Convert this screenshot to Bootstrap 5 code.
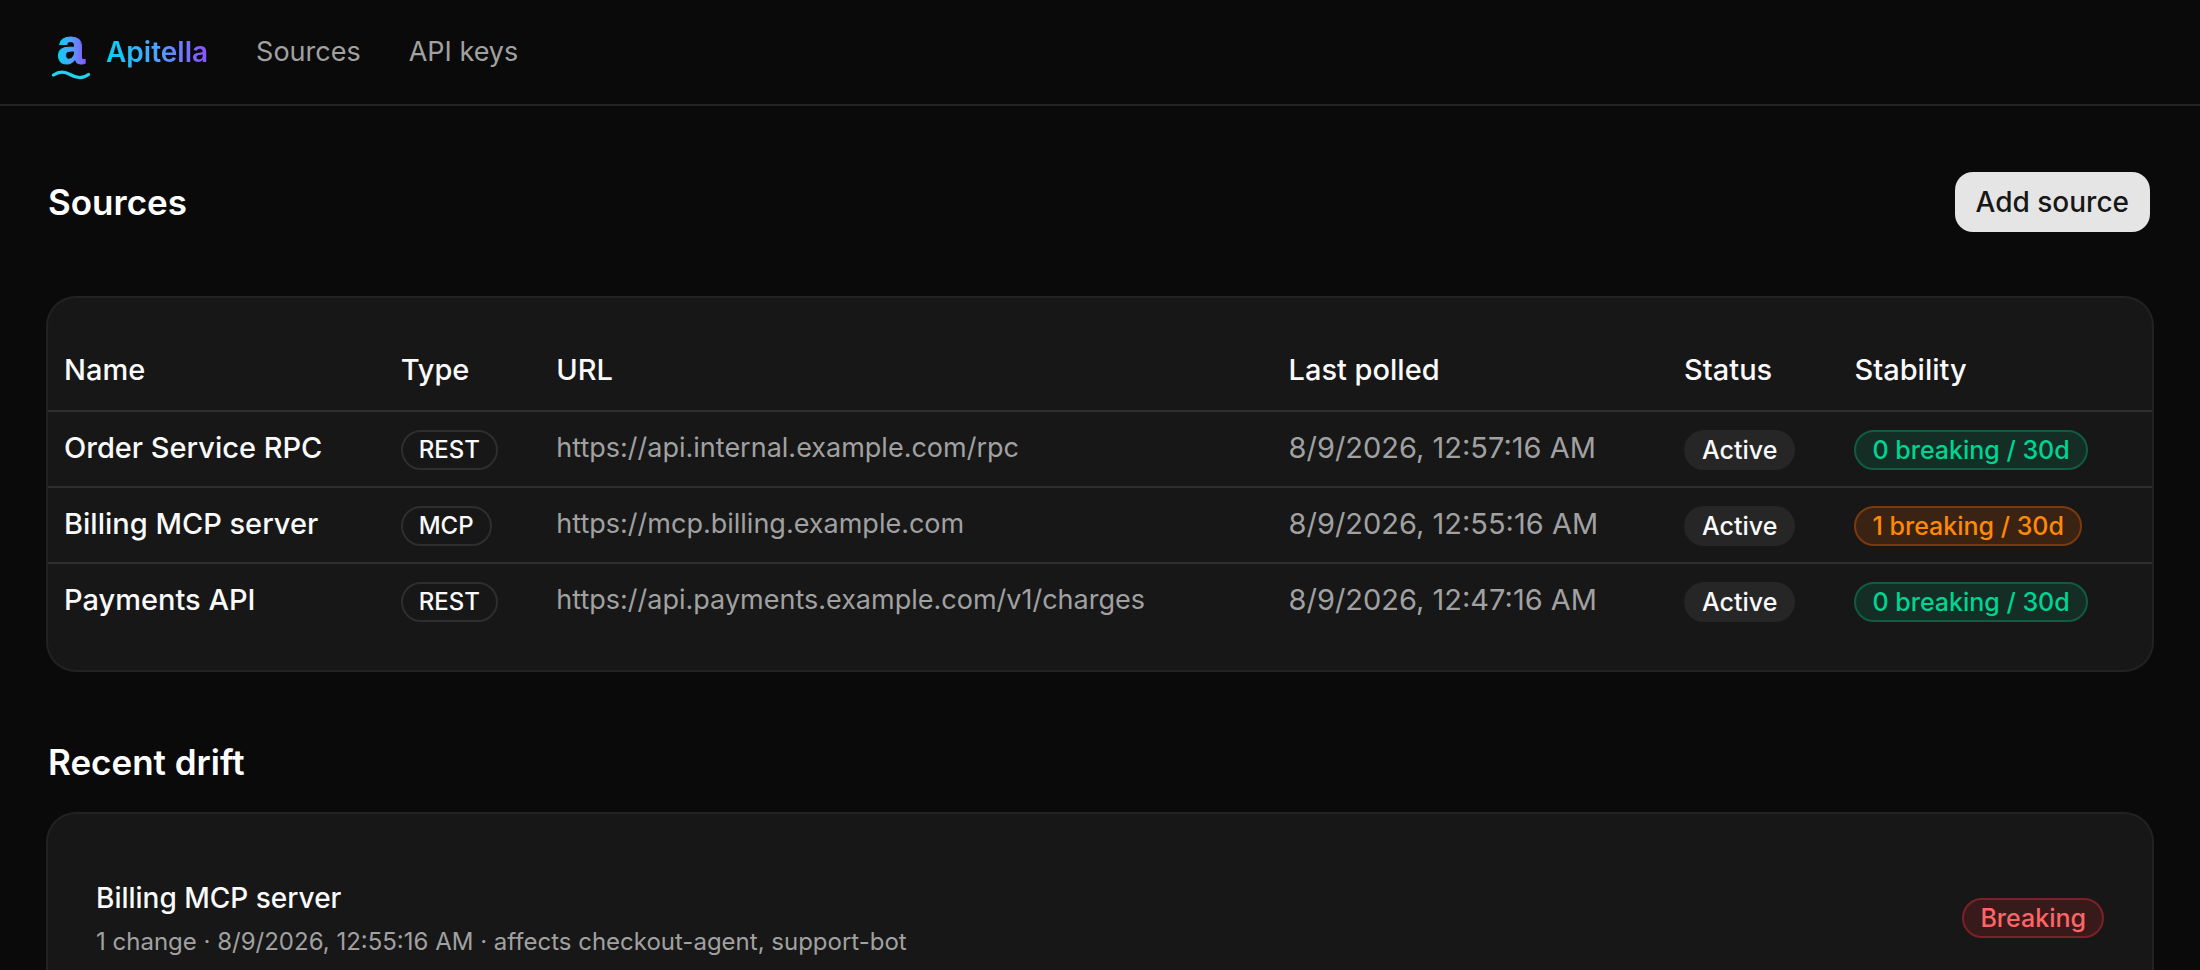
<!DOCTYPE html>
<html lang="en" data-bs-theme="dark">
<head>
<meta charset="utf-8">
<meta name="viewport" content="width=device-width, initial-scale=1">
<title>Apitella – Sources</title>
<link href="https://cdn.jsdelivr.net/npm/bootstrap@5.3.0/dist/css/bootstrap.min.css" rel="stylesheet">
<style>
  body { background: #0a0a0a; color: #fafafa; font-family: Inter, "Liberation Sans", sans-serif; font-size: 28px; line-height: 40px; }
  .site-nav { --bs-navbar-padding-y: 0; border-bottom: 2px solid #242424; padding: 0 48px; height: 106px; }
  .brand-word { font-size: 28px; font-weight: 600; line-height: 40px; background: linear-gradient(90deg, #00d3f2, #51a2ff 50%, #8e51ff); -webkit-background-clip: text; background-clip: text; color: transparent; }
  .site-nav .navbar-nav .nav-link { color: #a1a1a1; padding: 0; font-size: 27px; }
  .site-nav .navbar-nav .nav-link:hover { color: #fafafa; }
  .page-body { padding: 64px 48px; }
  .section-title { font-size: 35px; line-height: 56px; font-weight: 600; margin: 0; }
  .section-gap { margin-top: 64px; }
  .btn-add { --bs-btn-bg: #e5e5e5; --bs-btn-color: #171717; --bs-btn-hover-bg: #fff; --bs-btn-hover-color: #171717; --bs-btn-font-size: 28px; --bs-btn-font-weight: 500; --bs-btn-line-height: 40px; --bs-btn-border-radius: 20px; --bs-btn-border-width: 2px; --bs-btn-padding-x: 21px; --bs-btn-padding-y: 10px; background-clip: padding-box; white-space: nowrap; }
  .panel { background: #171717; border-radius: 28px; box-shadow: 0 0 0 2px #222; }
  .table-panel { padding: 32px 0; }
  .source-table { --bs-table-bg: transparent; --bs-table-color: #fafafa; border-color: #2e2e2e; border-collapse: separate; border-spacing: 0; table-layout: fixed; min-width: 1900px; margin: 0; font-size: 29px; }
  .source-table > :not(caption) > * > * { padding: 16px 16px 18px; border-bottom-width: 2px; white-space: nowrap; vertical-align: top; }
  .source-table > thead > tr > th { font-weight: 500; padding: 20px 16px; }
  .source-table > tbody > tr > th { font-weight: 500; }
  .source-table > tbody > tr:last-child > * { border-bottom: 0; }
  .source-table > tbody > tr > .dim, .dim { color: #a1a1a1; }
  .source-table > tbody > tr > .url { font-size: 27px; }
  .source-table > tbody > tr > .has-pill { padding: 18px 16px 16px; }
  .c-name { width: 16%; } .c-type { width: 7.4%; } .c-url { width: 34.8%; }
  .c-polled { width: 18.8%; } .c-status { width: 8.1%; } .c-stab { width: 14.9%; }
  .pill { display: flex; width: fit-content; height: 40px; align-items: center; border: 2px solid transparent; border-radius: 20px; padding: 0 16px; font-size: 25px; line-height: 32px; font-weight: 500; white-space: nowrap; }
  .pill-line { border-color: #2e2e2e; font-size: 24px; }
  .pill-fill { background: #262626; }
  .pill-green { background: #142e26; border-color: #0f5c43; color: #00d492; }
  .pill-orange { background: #3b2314; border-color: #7a3a0d; color: #ff8904; }
  .pill-red { background: #391a1b; border-color: #7b2127; color: #ff6467; }
  .drift-item { padding: 64px 48px; }
  .drift-name { font-weight: 500; }
  .drift-meta { font-size: 24px; line-height: 32px; }
</style>
</head>
<body>
<nav class="navbar navbar-expand site-nav" aria-label="Main">
  <a class="navbar-brand d-flex align-items-center p-0 m-0 me-5" href="#">
    <svg class="me-3" width="42" height="76" viewBox="0 0 42 76" aria-hidden="true">
      <defs><linearGradient id="mark-fill" x1="0" x2="1" y1="0" y2="0"><stop offset="0" stop-color="#00d3f2"/><stop offset=".5" stop-color="#51a2ff"/><stop offset="1" stop-color="#8e51ff"/></linearGradient></defs>
      <text x="9" y="50" font-family="Liberation Sans, sans-serif" font-size="50" font-weight="700" fill="url(#mark-fill)" stroke="url(#mark-fill)" stroke-width="1">a</text>
      <path d="M5.500 61C10 58 16 57 22 60.500S34 65.500 40.500 60.500" fill="none" stroke="#22d3ee" stroke-width="3.200" stroke-linecap="round"/>
    </svg>
    <span class="brand-word">Apitella</span>
  </a>
  <div class="navbar-nav gap-5">
    <a class="nav-link" href="#">Sources</a>
    <a class="nav-link" href="#">API keys</a>
  </div>
</nav>

<main class="page-body">
  <div class="d-flex justify-content-between align-items-center">
    <h1 class="section-title">Sources</h1>
    <button type="button" class="btn btn-add">Add source</button>
  </div>

  <section class="panel table-panel table-responsive section-gap">
    <table class="table source-table">
      <colgroup><col class="c-name"><col class="c-type"><col class="c-url"><col class="c-polled"><col class="c-status"><col class="c-stab"></colgroup>
      <thead>
        <tr><th scope="col">Name</th><th scope="col">Type</th><th scope="col">URL</th><th scope="col">Last polled</th><th scope="col">Status</th><th scope="col">Stability</th></tr>
      </thead>
      <tbody>
        <tr><th scope="row">Order Service RPC</th><td class="has-pill"><span class="pill pill-line">REST</span></td><td class="dim url">https://api.internal.example.com/rpc</td><td class="dim">8/9/2026, 12:57:16 AM</td><td class="has-pill"><span class="pill pill-fill">Active</span></td><td class="has-pill"><span class="pill pill-green">0 breaking / 30d</span></td></tr>
        <tr><th scope="row">Billing MCP server</th><td class="has-pill"><span class="pill pill-line">MCP</span></td><td class="dim url">https://mcp.billing.example.com</td><td class="dim">8/9/2026, 12:55:16 AM</td><td class="has-pill"><span class="pill pill-fill">Active</span></td><td class="has-pill"><span class="pill pill-orange">1 breaking / 30d</span></td></tr>
        <tr><th scope="row">Payments API</th><td class="has-pill"><span class="pill pill-line">REST</span></td><td class="dim url">https://api.payments.example.com/v1/charges</td><td class="dim">8/9/2026, 12:47:16 AM</td><td class="has-pill"><span class="pill pill-fill">Active</span></td><td class="has-pill"><span class="pill pill-green">0 breaking / 30d</span></td></tr>
      </tbody>
    </table>
  </section>

  <h2 class="section-title section-gap">Recent drift</h2>
  <section class="panel mt-4">
    <article class="drift-item d-flex justify-content-between align-items-center">
      <div class="d-flex flex-column gap-2">
        <div class="drift-name">Billing MCP server</div>
        <div class="drift-meta dim">1 change · 8/9/2026, 12:55:16 AM · affects checkout-agent, support-bot</div>
      </div>
      <span class="pill pill-red">Breaking</span>
    </article>
  </section>
</main>
<script src="https://cdn.jsdelivr.net/npm/bootstrap@5.3.0/dist/js/bootstrap.bundle.min.js"></script>
</body>
</html>
